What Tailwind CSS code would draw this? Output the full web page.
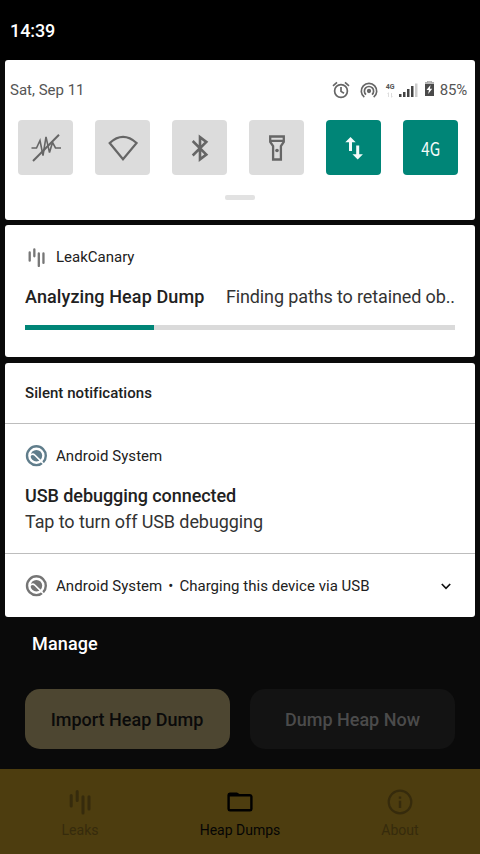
<!DOCTYPE html>
<html lang="en">
<head>
<meta charset="utf-8">
<meta name="viewport" content="width=device-width, initial-scale=1">
<title>Notifications</title>
<script src="https://cdn.jsdelivr.net/npm/@tailwindcss/browser@4"></script>
</head>
<body class="bg-[#0a0a0a]">
<svg class="hidden">
  <symbol id="leak" viewBox="0 0 22 24"><path d="M2.2 5.5v10.6M8.2 1.5v9M14 6.7v16.3M20 6.7v12.3" fill="none" stroke="currentColor" stroke-width="3" stroke-linecap="round"/></symbol>
  <symbol id="q" viewBox="0 0 22 22">
    <circle cx="11.400" cy="10.700" r="9.400" fill="none" stroke="currentColor" stroke-width="2.400"/>
    <circle cx="11.400" cy="10.700" r="5.800" fill="currentColor"/>
    <path d="M4.500 10.800C6.500 9 8.300 8.700 9.700 10L17 17.200" fill="none" stroke="#fff" stroke-width="1.700"/>
    <path d="M16.200 16.400l4 4.200" stroke="#fff" stroke-width="1.500"/>
  </symbol>
</svg>
<div class="w-[480px] h-[854px] overflow-hidden flex flex-col font-['Roboto',sans-serif] text-[#212121] whitespace-nowrap">
  <header class="h-[60px] shrink-0 bg-black text-white pl-[10px] flex items-center">
    <span class="text-[18px] leading-[20px] font-medium tracking-[-0.1px] pt-[1px]">14:39</span>
  </header>

  <section class="mx-[5px] h-[160px] shrink-0 bg-white rounded-[3px] flex flex-col">
    <div class="h-[60px] pl-[5px] pr-[8px] flex items-center justify-between text-[#555]">
      <span class="text-[15px]">Sat, Sep 11</span>
      <div class="flex items-center">
        <svg class="w-[18px] h-[18px] mr-[10px]" viewBox="0 0 18 18" fill="none" stroke="#666" stroke-width="1.700"><circle cx="9" cy="10" r="6.400"/><path d="M1 4.800L5 1.400M17 4.800L13 1.400M9 6v4.400l3 1.900"/></svg>
        <svg class="w-[18px] h-[18px] mr-[7px]" viewBox="0 0 18 18" fill="none" stroke="#666" stroke-width="1.700"><path d="M4.300 16.200A7.700 7.700 0 1 1 13.700 16.200M6 13.600A4.600 4.600 0 1 1 12 13.600"/><circle cx="9" cy="10" r="1.300" fill="#666"/></svg>
        <div class="flex flex-col items-center w-[11px] h-[15px] mr-[3px]"><span class="text-[7px] leading-[8px] font-bold">4G</span><svg class="w-[6px] h-[6px] mt-[1px]" viewBox="0 0 6 6"><path d="M2 0L0 2h1v3h1zM4 6l2-2H5V1H4z" fill="#ddd"/></svg></div>
        <svg class="w-[19px] h-[14px] mr-[7px] -mt-[1px]" viewBox="0 0 19 14" fill="#444"><path d="M0 11h2.500v3H0zM4 9h2.500v5H4zM8 6h2.500v8H8zM12 3h2.500v11H12z"/><path d="M16 .5h2.500V14H16z" fill="#ccc"/></svg>
        <svg class="w-[9px] h-[15px] mr-[6px] -mt-[3px]" viewBox="0 0 9 15"><path d="M2.500 0h4v1.500H9V15H0V1.500h2.500z" fill="#4a4a4a"/><path d="M2.500 0h4v1.500H9V3H0V1.500h2.500z" fill="#bbb"/><path d="M5.500 4L1.500 9h2.400L3.200 13l4-5.200H4.900z" fill="#fff"/></svg>
        <span class="text-[15px] tracking-[-0.2px]">85%</span>
      </div>
    </div>
    <div class="px-[13px] flex gap-[22px] text-[#666]">
      <div class="w-[55px] h-[55px] rounded-[4px] bg-[#dcdcdc] flex items-center justify-center"><svg class="w-[30px] h-[28px]" viewBox="0 0 30 28" fill="none" stroke="currentColor"><path d="M.500 14h5L9 6.500l3 15L15 2.800l3.500 15.800 3-10.200L24.500 14H30" stroke-width="1.600"/><path d="M2 27L28 .8" stroke-width="2"/></svg></div>
      <div class="w-[55px] h-[55px] rounded-[4px] bg-[#dcdcdc] flex items-center justify-center"><svg class="w-[30px] h-[26px]" viewBox="0 0 30 26" fill="none" stroke="currentColor" stroke-width="2.200"><path d="M1.700 8Q15-4.200 28.600 8L15 24.200z"/></svg></div>
      <div class="w-[55px] h-[55px] rounded-[4px] bg-[#dcdcdc] flex items-center justify-center"><svg class="w-[18px] h-[28px]" viewBox="0 0 18 28" fill="none" stroke="currentColor" stroke-width="2.600"><path d="M1.700 7l13.600 13.500L9 25.300V3.200l6.300 4.700L1.700 21.500"/></svg></div>
      <div class="w-[55px] h-[55px] rounded-[4px] bg-[#dcdcdc] flex items-center justify-center"><svg class="w-[18px] h-[28px]" viewBox="0 0 18 28" fill="none" stroke="currentColor" stroke-width="2.300"><path d="M2.200 2.500h13.600v5.300l-2.900 4.300v13.400H5.100V12.100L2.200 7.800zM2 6.800h14"/><circle cx="9" cy="16.500" r="1.800" fill="currentColor" stroke="none"/></svg></div>
      <div class="w-[55px] h-[55px] rounded-[4px] bg-[#008577] flex items-center justify-center"><svg class="w-[18px] h-[24px]" viewBox="0 0 18 24" fill="#f4fbfa"><path d="M5.500 1L.300 6.300H4V15h3V6.300h3.700zM12.700 23.500l5.200-5.300h-3.700V9.500h-3v8.700H7.500z"/></svg></div>
      <div class="w-[55px] h-[55px] rounded-[4px] bg-[#008577] flex items-center justify-center text-[#f4fbfa]"><span class="font-['Noto_Sans_CJK_SC',sans-serif] text-[19px] leading-[20px] scale-x-[0.8] pt-[1px]">4G</span></div>
    </div>
    <div class="w-[30px] h-[5px] rounded-[2px] bg-[#e2e2e2] mt-[20px] mx-auto"></div>
  </section>

  <section class="mx-[5px] mt-[5px] h-[132px] shrink-0 bg-white rounded-[3px] px-[20px] pt-[20px]">
    <div class="h-[24px] flex items-center"><svg class="w-[17px] h-[19px] ml-[3px] mr-[11px] text-[#777]"><use href="#leak"/></svg><span class="text-[15px]">LeakCanary</span></div>
    <div class="h-[26px] mt-[14px] flex items-center justify-between text-[18px]"><span class="font-medium tracking-[0.1px]">Analyzing Heap Dump</span><span class="text-[#333] tracking-[-0.12px]">Finding paths to retained ob..</span></div>
    <div class="h-[5px] mt-[16px] bg-[#dadada]"><div class="h-full bg-[#008577]" style="width:30%"></div></div>
  </section>

  <section class="mx-[5px] mt-[6px] h-[254px] shrink-0 bg-white rounded-[3px] flex flex-col">
    <div class="h-[61px] px-[20px] border-b border-[#bdbdbd] flex items-center"><span class="text-[15px] font-medium tracking-[0.05px]">Silent notifications</span></div>
    <div class="h-[130px] px-[20px] pt-[20px] border-b border-[#bdbdbd]">
      <div class="h-[24px] flex items-center"><svg class="w-[22px] h-[22px] mr-[9px] text-[#607d8b]"><use href="#q"/></svg><span class="text-[15px] tracking-[0.05px]">Android System</span></div>
      <div class="mt-[15px] text-[18px] leading-[26px] font-medium tracking-[-0.06px]">USB debugging connected</div>
      <div class="text-[18px] leading-[26px] text-[#333] tracking-[-0.09px]">Tap to turn off USB debugging</div>
    </div>
    <div class="h-[63px] px-[20px] pt-[1px] flex items-center">
      <svg class="w-[22px] h-[22px] mr-[9px] text-[#757575]"><use href="#q"/></svg>
      <span class="text-[15px] tracking-[0.05px] pt-[1px]">Android System</span><span class="text-[15px] ml-[6px] mr-[6px] pt-[1px]">•</span><span class="text-[15px] tracking-[0.03px] pt-[1px]">Charging this device via USB</span>
      <svg class="w-[10px] h-[7px] ml-auto mr-[4px]" viewBox="0 0 10 7" fill="none" stroke="#111" stroke-width="1.700"><path d="M.800 1L5 5.300 9.200 1"/></svg>
    </div>
  </section>

  <div class="h-[54px] shrink-0 pl-[32px] pb-[2px] flex items-center text-white text-[18px] font-medium tracking-[0.15px]">Manage</div>
  <div class="mt-[18px] px-[25px] flex gap-[20px] shrink-0 text-[18px] font-medium">
    <button class="w-[205px] h-[60px] rounded-[15px] bg-[#4d4631] text-[#0a0a0a] flex items-center justify-center"><span class="-ml-[1px]">Import Heap Dump</span></button>
    <button class="w-[205px] h-[60px] rounded-[15px] bg-[#131313] text-[#4b4b4b] flex items-center justify-center"><span>Dump Heap Now</span></button>
  </div>

  <nav class="mt-[20px] h-[85px] shrink-0 bg-[#4d3d0f] grid grid-cols-3 text-[14px] leading-[20px] text-[#362b0c]">
    <div class="flex flex-col items-center pt-[20px]"><svg class="w-[22px] h-[26px]"><use href="#leak"/></svg><span class="mt-[5px]">Leaks</span></div>
    <div class="flex flex-col items-center pt-[20px] text-[#050505]"><svg class="w-[26px] h-[26px]" viewBox="0 0 26 26"><path d="M3 3.500h7l2.500 1.500h10.500A2.600 2.600 0 0 1 25.600 7.500v12.500a2.600 2.600 0 0 1-2.600 2.500H3A2.600 2.600 0 0 1 .4 20V6A2.500 2.500 0 0 1 3 3.500zM2.800 7.500v12.500h20.400V7.500z" fill="#000" fill-rule="evenodd"/></svg><span class="mt-[5px]">Heap Dumps</span></div>
    <div class="flex flex-col items-center pt-[20px]"><svg class="w-[26px] h-[26px]" viewBox="0 0 26 26"><circle cx="13" cy="13" r="11.300" fill="none" stroke="currentColor" stroke-width="2.200"/><path d="M11.800 7.500h2.400v2.300h-2.400zM11.800 11.800h2.400v7.200h-2.400z" fill="currentColor"/></svg><span class="mt-[5px]">About</span></div>
  </nav>
</div>
</body>
</html>
